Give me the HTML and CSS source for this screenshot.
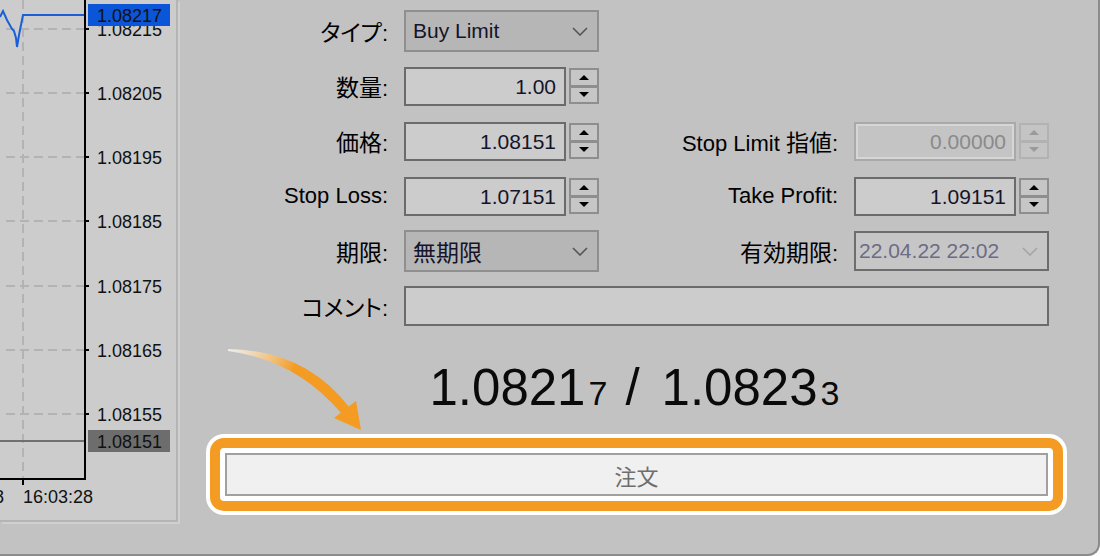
FILE: index.html
```html
<!DOCTYPE html>
<html>
<head>
  <title>注文</title>
  <link rel="stylesheet" href="styles.css">
</head>
<body>
  <div class="window">
    <!-- Chart on the left -->
    <div class="chart-panel">
      <svg class="chart" width="176" height="520" viewBox="0 0 176 520">
        <g stroke="#b3b3b3" stroke-width="2" stroke-dasharray="9 5">
          <line x1="23" y1="0" x2="23" y2="478"></line>
          <line x1="6" y1="29" x2="84" y2="29"></line>
          <line x1="6" y1="93" x2="84" y2="93"></line>
          <line x1="6" y1="157" x2="84" y2="157"></line>
          <line x1="6" y1="221" x2="84" y2="221"></line>
          <line x1="6" y1="286" x2="84" y2="286"></line>
          <line x1="6" y1="350" x2="84" y2="350"></line>
          <line x1="6" y1="414" x2="84" y2="414"></line>
        </g>
        <line x1="0" y1="441" x2="84" y2="441" stroke="#707070" stroke-width="2"></line>
        <polyline points="0,17 3,11 7,20 12,29 14,31 16,38 17,47 19,35 23,15 86,15" fill="none" stroke="#1b5fd6" stroke-width="2"></polyline>
        <path d="M85 0V479H0" fill="none" stroke="#000" stroke-width="2"></path>
        <g stroke="#000" stroke-width="2">
          <line x1="86" y1="29" x2="89" y2="29"></line>
          <line x1="86" y1="93" x2="89" y2="93"></line>
          <line x1="86" y1="157" x2="89" y2="157"></line>
          <line x1="86" y1="221" x2="89" y2="221"></line>
          <line x1="86" y1="286" x2="89" y2="286"></line>
          <line x1="86" y1="350" x2="89" y2="350"></line>
          <line x1="86" y1="414" x2="89" y2="414"></line>
          <line x1="23" y1="480" x2="23" y2="485"></line>
        </g>
        <g class="axis-text">
          <text x="97" y="36">1.08215</text>
          <text x="97" y="100">1.08205</text>
          <text x="97" y="164">1.08195</text>
          <text x="97" y="228">1.08185</text>
          <text x="97" y="293">1.08175</text>
          <text x="97" y="357">1.08165</text>
          <text x="97" y="421">1.08155</text>
          <text x="4" y="503" text-anchor="end">16:03:18</text>
          <text x="23" y="503">16:03:28</text>
        </g>
        <rect x="88" y="4" width="82" height="22" fill="#0b55d8"></rect>
        <text class="axis-text" x="97" y="22" fill="#c9d4f0">1.08217</text>
        <rect x="88" y="430" width="82" height="22" fill="#6d6d6d"></rect>
        <text class="axis-text" x="97" y="448" fill="#d4d4d4">1.08151</text>
      </svg>
    </div>

    <!-- Order form -->
    <div class="order-panel">
      <div class="order-form">
        <div class="lbl first"><span class="ja">タイプ</span>:</div>
        <div class="combo"><span>Buy Limit</span>
          <svg width="16" height="9" viewBox="0 0 16 9"><path d="M1 1l7 7 7-7" fill="none" stroke="#555" stroke-width="1.6"></path></svg>
        </div>

        <div class="lbl first"><span class="ja">数量</span>:</div>
        <div class="spin">
          <div class="field">1.00</div>
          <div class="spin-btns"><span><i class="up"></i></span><span><i class="down"></i></span></div>
        </div>

        <div class="lbl first"><span class="ja">価格</span>:</div>
        <div class="spin">
          <div class="field">1.08151</div>
          <div class="spin-btns"><span><i class="up"></i></span><span><i class="down"></i></span></div>
        </div>
        <div class="lbl">Stop Limit <span class="ja">指値</span>:</div>
        <div class="spin disabled">
          <div class="field">0.00000</div>
          <div class="spin-btns"><span><i class="up"></i></span><span><i class="down"></i></span></div>
        </div>

        <div class="lbl first">Stop Loss:</div>
        <div class="spin">
          <div class="field">1.07151</div>
          <div class="spin-btns"><span><i class="up"></i></span><span><i class="down"></i></span></div>
        </div>
        <div class="lbl">Take Profit:</div>
        <div class="spin">
          <div class="field">1.09151</div>
          <div class="spin-btns"><span><i class="up"></i></span><span><i class="down"></i></span></div>
        </div>

        <div class="lbl first"><span class="ja">期限</span>:</div>
        <div class="combo"><span class="ja">無期限</span>
          <svg width="16" height="9" viewBox="0 0 16 9"><path d="M1 1l7 7 7-7" fill="none" stroke="#555" stroke-width="1.6"></path></svg>
        </div>
        <div class="lbl"><span class="ja">有効期限</span>:</div>
        <div class="combo date"><span>22.04.22 22:02</span>
          <svg width="16" height="9" viewBox="0 0 16 9"><path d="M1 1l7 7 7-7" fill="none" stroke="#a4a4a4" stroke-width="1.6"></path></svg>
        </div>

        <div class="lbl first"><span class="ja">コメント</span>:</div>
        <div class="field comment"></div>
      </div>

      <div class="quote">
        <span>1.0821</span><small>7</small><span class="slash">/</span><span>1.0823</span><small>3</small>
      </div>

      <div class="submit-frame">
        <button class="submit">注文</button>
      </div>
    </div>

    <!-- hint arrow pointing to the order button -->
    <svg class="hint-arrow" width="400" height="460" viewBox="0 0 400 460">
      <defs>
        <linearGradient id="arrowFade" x1="228" y1="350" x2="330" y2="400" gradientUnits="userSpaceOnUse">
          <stop offset="0" stop-color="#ffffff" stop-opacity="0.7"></stop>
          <stop offset="0.6" stop-color="#f39b22"></stop>
          <stop offset="1" stop-color="#f39b22"></stop>
        </linearGradient>
      </defs>
      <path d="M228 349Q305 350 349 407L341 413Q296 360 228 351Z" fill="url(#arrowFade)"></path>
      <polygon points="334,418 356,401 361,430" fill="#f39b22"></polygon>
    </svg>
  </div>
</body>
</html>
```

FILE: styles.css
```css
body {
  margin: 0;
  width: 1100px;
  height: 556px;
  overflow: hidden;
  background: #ffffff;
  font-family: "Liberation Sans", "Noto Sans CJK JP", sans-serif;
  color: #000;
}

.window {
  position: relative;
  display: flex;
  align-items: flex-start;
  width: 1098px;
  height: 554px;
  background: #c2c2c2;
  border-right: 2px solid #8c8c8c;
  border-bottom: 2px solid #8c8c8c;
  border-bottom-right-radius: 12px;
  overflow: hidden;
}

/* Chart */
.chart-panel {
  flex: none;
  width: 176px;
  height: 520px;
  margin-right: 2px;
  background: #cccccc;
  border-right: 2px solid #b4b4b4;
  border-bottom: 2px solid #b4b4b4;
  box-shadow: 2px 2px 0 #d0d0d0;
  overflow: hidden;
}
.chart { display: block; }
.axis-text { font-family: "Liberation Sans", sans-serif; font-size: 18px; fill: #111; }

/* Form */
.order-panel { flex: 1; padding-top: 11px; }
.order-form {
  display: grid;
  grid-template-columns: 208px 195px 1fr 195px;
  grid-auto-rows: 40px;
  column-gap: 16px;
  row-gap: 15px;
  align-items: center;
  padding-right: 49px;
}
.lbl {
  text-align: right;
  font-size: 22px;
  white-space: nowrap;
  grid-column: 3;
}
.lbl.first { grid-column: 1; }
.ja { font-size: 23px; font-feature-settings: "palt"; font-family: "Noto Sans CJK JP", sans-serif; }

.combo {
  height: 42px;
  box-sizing: border-box;
  display: flex;
  align-items: center;
  justify-content: space-between;
  padding: 0 9px 0 7px;
  background: #b6b6b6;
  border: 2px solid #8f8f8f;
  font-size: 21px;
  color: #14142a;
}
.combo svg { display: block; }
.combo.date { height: 40px; background: #c6c6c6; border-color: #6d6d6d; color: #6c6c86; padding-left: 3px; }

.field {
  height: 39px;
  box-sizing: border-box;
  background: #cccccc;
  border: 2px solid #6b6b6b;
  text-align: right;
  padding-right: 8px;
  line-height: 35px;
  font-size: 21px;
  color: #14142a;
}
.field.comment { grid-column: 2 / 5; height: 40px; }

.spin { display: flex; gap: 3px; align-items: center; }
.spin .field { width: 162px; }
.spin-btns {
  width: 30px;
  height: 36px;
  display: flex;
  flex-direction: column;
}
.spin-btns span {
  flex: 1;
  display: flex;
  align-items: center;
  justify-content: center;
  background: #c6c6c6;
  border: 2px solid #8e8e8e;
}
.spin-btns span + span { border-top-width: 1px; }
.spin-btns .up { border-left: 5px solid transparent; border-right: 5px solid transparent; border-bottom: 5px solid #000; }
.spin-btns .down { border-left: 5px solid transparent; border-right: 5px solid transparent; border-top: 5px solid #000; }

.spin.disabled .field {
  background: #c4c4c4;
  border-color: #a9a9a9;
  box-shadow: inset 0 0 0 2px #d6d6d6;
  color: #8a8a8a;
}
.spin.disabled .spin-btns span { border-color: #b2b2b2; background: #c4c4c4; }
.spin.disabled .up { border-bottom-color: #9a9a9a; }
.spin.disabled .down { border-top-color: #9a9a9a; }

/* Quote */
.quote {
  margin: 37px 49px 0 40px;
  display: flex;
  justify-content: center;
  align-items: baseline;
  font-size: 51px;
  line-height: 50px;
  color: #0a0a0a;
}
.quote small { font-size: 34px; margin-left: 3px; }
.quote .slash { margin: 0 22px 0 18px; }

/* Order button with highlight */
.submit-frame {
  margin: 20px 35px 0 30px;
  padding: 5px;
  background: #fff;
  border: 10px solid #f39b22;
  border-radius: 14px;
  box-shadow: 0 0 0 4px #fff;
}
.submit {
  display: block;
  width: 100%;
  height: 43px;
  background: #f0f0f0;
  border: 2px solid #a0a0a0;
  font-family: "Noto Sans CJK JP", sans-serif;
  font-size: 22px;
  color: #6e6e6e;
  padding: 0;
}

.hint-arrow {
  position: absolute;
  left: 0;
  top: 0;
  pointer-events: none;
}
```
